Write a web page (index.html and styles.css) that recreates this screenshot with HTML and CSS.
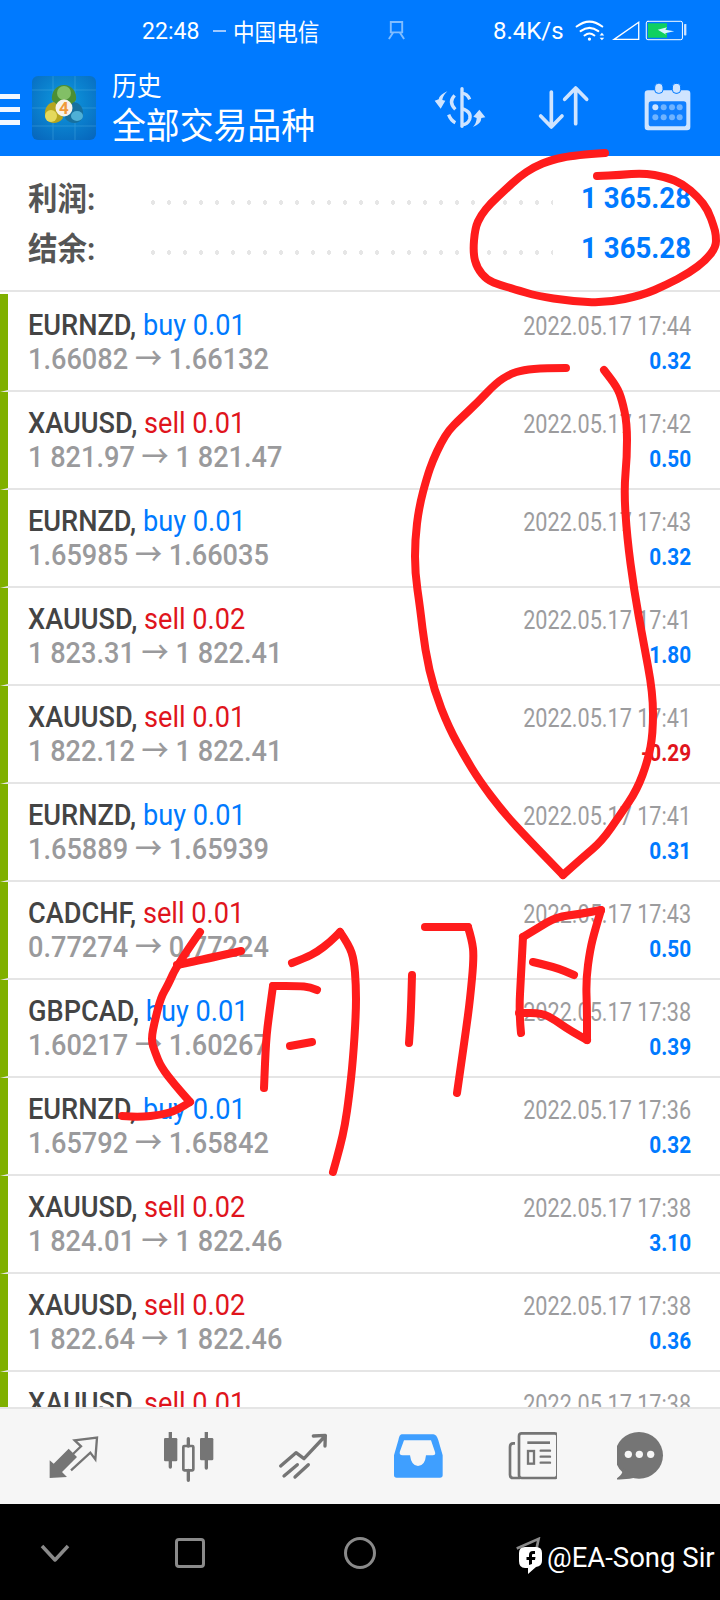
FILE: index.html
```html
<!DOCTYPE html>
<html lang="zh-CN">
<head>
    <meta charset="UTF-8">
    <meta name="viewport" content="width=device-width, initial-scale=1.0">
    <title>历史 - 全部交易品种</title>
    <link rel="stylesheet" href="styles.css">
</head>
<body>
    <div class="phone">
        <div class="status">
            <span class="st st-time">22:48</span>
            <span class="st-dash"></span>
            <span class="st st-carrier">中国电信</span>
            <svg class="st-nfc" viewBox="0 0 20 20"><path d="M4 1h12v11H4zM6.500 12 2 19M13.500 12l4.500 7" fill="none" stroke="#fff" stroke-width="2"/></svg>
            <span class="st st-speed">8.4K/s</span>
            <svg class="st-icons" viewBox="225 25 340 70">
                <g fill="none" stroke="#fff" stroke-linecap="round">
                    <path d="M228 48Q267 18 306 48M240 62Q267 42 294 62M252 75Q267 63 282 75" stroke-width="6"/>
                    <path d="M342 87 417 35V87Z" stroke-width="4" stroke-linejoin="miter"/>
                    <rect x="440" y="32" width="110" height="56" rx="5" stroke-width="3"/>
                </g>
                <circle cx="267" cy="86" r="5" fill="#fff"/>
                <path d="M298 75h14l-7-8zM298 82h14l-7 8z" fill="#fff"/>
                <rect x="445" y="38" width="58" height="44" fill="#10d060"/>
                <path d="M475 58 503 50 498 58 525 62 497 68 502 74Z" fill="#d8f4ff"/>
                <rect x="555" y="40" width="7" height="35" rx="2" fill="#cfe4ff"/>
            </svg>
        </div>

        <div class="appbar">
            <div class="menu"><i></i><i></i><i></i></div>
            <svg class="logo" viewBox="0 0 64 64">
                <defs>
                    <radialGradient id="tile" cx=".5" cy=".4" r=".75">
                        <stop offset="0" stop-color="#0e9be0"/>
                        <stop offset="1" stop-color="#0766bc"/>
                    </radialGradient>
                </defs>
                <rect width="64" height="64" rx="6" fill="url(#tile)"/>
                <path d="M21 0v64M43 0v64M0 14h64M0 32h64M0 50h64" stroke="#6cc4ee" stroke-width="1" opacity=".3"/>
                <path d="M32 9C24 9 19 16 20 24L26 31H38L44 24C45 16 40 9 32 9Z" fill="#4c8f34"/>
                <ellipse cx="32" cy="17" rx="7" ry="7" fill="#82bf66"/>
                <path d="M22 26C14 27 11 36 14 43C18 49 27 48 31 42L27 30Z" fill="#b5a51f"/>
                <ellipse cx="19" cy="40" rx="6" ry="6" fill="#e4d95c"/>
                <path d="M42 26C50 27 53 36 50 43C46 49 37 48 33 42L37 30Z" fill="#17709f"/>
                <ellipse cx="45" cy="40" rx="6" ry="5" fill="#4eb0d6"/>
                <circle cx="32" cy="32" r="8.500" fill="#f6f2ea"/>
                <text class="logo-four" x="32" y="38" text-anchor="middle">4</text>
            </svg>
            <div class="titles">
                <div class="title-small">历史</div>
                <div class="title-big">全部交易品种</div>
            </div>
            <div class="actions">
                <svg viewBox="25 20 162 150">
                    <g fill="none" stroke="#cfe4ff" stroke-width="10">
                        <path d="M112 40V153" stroke-linecap="round"/>
                        <path d="M135 72Q128 54 112 54M112 100Q142 110 135 132Q128 148 112 148M90 60Q70 80 92 102M72 118Q78 135 92 142"/>
                    </g>
                    <path d="M68 48Q42 60 42 72L30 76 48 100 62 76 53 74Q54 62 68 48ZM145 155Q170 145 170 128L182 126 164 103 146 124 156 128Q156 142 145 155Z" fill="#cfe4ff"/>
                </svg>
                <svg viewBox="340 20 162 150">
                    <path d="M380 50V155M348 122 380 155 412 122M453 145V38M420 72 453 38 486 72" fill="none" stroke="#cfe4ff" stroke-width="11" stroke-linecap="round" stroke-linejoin="round"/>
                </svg>
                <svg viewBox="655 20 162 150">
                    <rect x="660" y="45" width="137" height="120" rx="10" fill="#cfe4ff"/>
                    <rect x="672" y="78" width="113" height="75" rx="8" fill="#107fff"/>
                    <rect x="690" y="24" width="25" height="30" rx="11" fill="#cfe4ff" stroke="#007aff" stroke-width="3"/>
                    <rect x="743" y="24" width="25" height="30" rx="11" fill="#cfe4ff" stroke="#007aff" stroke-width="3"/>
                    <g fill="#6fb3ff">
                        <circle cx="692" cy="96" r="9" fill="#cfe4ff"/><circle cx="717" cy="96" r="9"/><circle cx="742" cy="96" r="9"/><circle cx="765" cy="96" r="9"/>
                        <circle cx="692" cy="126" r="9"/><circle cx="717" cy="126" r="9"/><circle cx="742" cy="126" r="9"/><circle cx="765" cy="126" r="9"/>
                    </g>
                </svg>
            </div>
        </div>

        <div class="summary">
            <div class="sum-row">
                <span class="sum-label">利润:</span>
                <span class="sum-dots"></span>
                <span class="sum-value">1 365.28</span>
            </div>
            <div class="sum-row">
                <span class="sum-label">结余:</span>
                <span class="sum-dots"></span>
                <span class="sum-value">1 365.28</span>
            </div>
        </div>

        <div class="list">
            <div class="row">
                <div class="row-left">
                    <div class="line1"><b>EURNZD,</b> <span class="buy">buy 0.01</span></div>
                    <div class="line2">1.66082 → 1.66132</div>
                </div>
                <div class="row-right">
                    <div class="date">2022.05.17 17:44</div>
                    <div class="profit">0.32</div>
                </div>
            </div>
            <div class="row">
                <div class="row-left">
                    <div class="line1"><b>XAUUSD,</b> <span class="sell">sell 0.01</span></div>
                    <div class="line2">1 821.97 → 1 821.47</div>
                </div>
                <div class="row-right">
                    <div class="date">2022.05.17 17:42</div>
                    <div class="profit">0.50</div>
                </div>
            </div>
            <div class="row">
                <div class="row-left">
                    <div class="line1"><b>EURNZD,</b> <span class="buy">buy 0.01</span></div>
                    <div class="line2">1.65985 → 1.66035</div>
                </div>
                <div class="row-right">
                    <div class="date">2022.05.17 17:43</div>
                    <div class="profit">0.32</div>
                </div>
            </div>
            <div class="row">
                <div class="row-left">
                    <div class="line1"><b>XAUUSD,</b> <span class="sell">sell 0.02</span></div>
                    <div class="line2">1 823.31 → 1 822.41</div>
                </div>
                <div class="row-right">
                    <div class="date">2022.05.17 17:41</div>
                    <div class="profit">1.80</div>
                </div>
            </div>
            <div class="row">
                <div class="row-left">
                    <div class="line1"><b>XAUUSD,</b> <span class="sell">sell 0.01</span></div>
                    <div class="line2">1 822.12 → 1 822.41</div>
                </div>
                <div class="row-right">
                    <div class="date">2022.05.17 17:41</div>
                    <div class="profit loss">-0.29</div>
                </div>
            </div>
            <div class="row">
                <div class="row-left">
                    <div class="line1"><b>EURNZD,</b> <span class="buy">buy 0.01</span></div>
                    <div class="line2">1.65889 → 1.65939</div>
                </div>
                <div class="row-right">
                    <div class="date">2022.05.17 17:41</div>
                    <div class="profit">0.31</div>
                </div>
            </div>
            <div class="row">
                <div class="row-left">
                    <div class="line1"><b>CADCHF,</b> <span class="sell">sell 0.01</span></div>
                    <div class="line2">0.77274 → 0.77224</div>
                </div>
                <div class="row-right">
                    <div class="date">2022.05.17 17:43</div>
                    <div class="profit">0.50</div>
                </div>
            </div>
            <div class="row">
                <div class="row-left">
                    <div class="line1"><b>GBPCAD,</b> <span class="buy">buy 0.01</span></div>
                    <div class="line2">1.60217 → 1.60267</div>
                </div>
                <div class="row-right">
                    <div class="date">2022.05.17 17:38</div>
                    <div class="profit">0.39</div>
                </div>
            </div>
            <div class="row">
                <div class="row-left">
                    <div class="line1"><b>EURNZD,</b> <span class="buy">buy 0.01</span></div>
                    <div class="line2">1.65792 → 1.65842</div>
                </div>
                <div class="row-right">
                    <div class="date">2022.05.17 17:36</div>
                    <div class="profit">0.32</div>
                </div>
            </div>
            <div class="row">
                <div class="row-left">
                    <div class="line1"><b>XAUUSD,</b> <span class="sell">sell 0.02</span></div>
                    <div class="line2">1 824.01 → 1 822.46</div>
                </div>
                <div class="row-right">
                    <div class="date">2022.05.17 17:38</div>
                    <div class="profit">3.10</div>
                </div>
            </div>
            <div class="row">
                <div class="row-left">
                    <div class="line1"><b>XAUUSD,</b> <span class="sell">sell 0.02</span></div>
                    <div class="line2">1 822.64 → 1 822.46</div>
                </div>
                <div class="row-right">
                    <div class="date">2022.05.17 17:38</div>
                    <div class="profit">0.36</div>
                </div>
            </div>
            <div class="row">
                <div class="row-left">
                    <div class="line1"><b>XAUUSD,</b> <span class="sell">sell 0.01</span></div>
                </div>
                <div class="row-right">
                    <div class="date">2022.05.17 17:38</div>
                </div>
            </div>
        </div>

        <div class="tabs">
            <svg viewBox="50 30 162 150">
                <path d="M58 115 70 125 115 80 140 105 95 150 110 165 58 168Z" fill="#757575"/>
                <path d="M122 145 180 92 195 112 200 47 133 55 152 73 128 96" fill="none" stroke="#757575" stroke-width="7"/>
            </svg>
            <svg viewBox="393 30 162 150">
                <path d="M421 30V135M529 30V138" stroke="#757575" stroke-width="10" stroke-linecap="round"/>
                <rect x="402" y="48" width="40" height="70" rx="4" fill="#757575"/>
                <rect x="510" y="48" width="40" height="67" rx="4" fill="#757575"/>
                <path d="M475 50V72M475 145V175" stroke="#757575" stroke-width="10" stroke-linecap="round"/>
                <rect x="460" y="72" width="30" height="73" rx="3" fill="none" stroke="#757575" stroke-width="8"/>
            </svg>
            <svg viewBox="735 30 162 150">
                <path d="M752 132 798 92 822 110 880 48M850 42 886 40 885 72M762 162 802 128M795 165 835 128" fill="none" stroke="#757575" stroke-width="10" stroke-linecap="round" stroke-linejoin="round"/>
            </svg>
            <svg viewBox="27 30 162 150">
                <path d="M65 37H160Q170 37 175 55L188 100V160Q188 167 180 167H50Q42 167 42 160V100L55 55Q58 37 65 37Z" fill="#3f9fff"/>
                <path d="M72 55H153L165 90Q168 100 158 100H138Q135 132 114 132Q94 132 90 100H68Q56 100 60 88Z" fill="#f6f6f6"/>
            </svg>
            <svg viewBox="369 30 162 150">
                <g fill="none" stroke="#757575">
                    <rect x="417" y="34" width="115" height="134" rx="8" stroke-width="8"/>
                    <path d="M405 64H400Q390 64 390 75V158Q390 168 400 168H420" stroke-width="8"/>
                    <path d="M442 62H510" stroke-width="8"/>
                    <rect x="444" y="87" width="18" height="38" stroke-width="7"/>
                    <path d="M482 86H510M482 104H510M482 122H510" stroke-width="7" stroke-linecap="round"/>
                </g>
            </svg>
            <svg viewBox="711 30 162 150">
                <ellipse cx="777" cy="100" rx="72" ry="70" fill="#757575"/>
                <path d="M730 140Q728 160 705 172Q745 174 775 165Z" fill="#757575"/>
                <circle cx="745" cy="97" r="11" fill="#f6f6f6"/><circle cx="778" cy="97" r="11" fill="#f6f6f6"/><circle cx="812" cy="97" r="11" fill="#f6f6f6"/>
            </svg>
        </div>

        <div class="navbar">
            <svg class="nav-back" viewBox="0 0 32 20"><path d="M3 3 16 17 29 3" fill="none" stroke="#8a8a8a" stroke-width="3.500" stroke-linejoin="round"/></svg>
            <span class="nav-square"></span>
            <span class="nav-circle"></span>
        </div>

        <!-- red marker scribbled over the screenshot, smoothed by scribble.js -->
        <svg class="scribble" viewBox="0 0 720 1600">
            <polyline points="605,153 575,155 551,160 534,167 519,177 505,190 491,203 481,215 475,228 473,253 477,268 487,280 500,285 514,289 537,296 570,301 606,303 643,295 666,285 689,273 706,260 716,247 716,235 714,227 708,210 698,197 683,184 666,177 643,173 620,175 597,176"/>
            <polyline points="566,368 545,368 523,370 510,374 496,383 478,402 459,420 449,430 441,443 433,460 427,477 419,507 415,540 415,573 420,607 425,650 434,690 449,728 465,757 479,780 503,812 530,841 563,875"/>
            <polyline points="563,875 582,858 602,841 620,815 637,790 648,760 653,734 653,693 643,640 634,590 627,537 624,490 627,457 627,423 622,400 617,387 604,370"/>
            <polyline points="241,951 210,958 177,965"/>
            <polyline points="200,932 177,965 168,985 161,997 155,1020 151,1040 155,1052 161,1067 175,1085 190,1102"/>
            <polyline points="190,1102 178,1110 161,1115 140,1117 122,1116"/>
            <polyline points="292,963 305,958 317,952 330,942 340,932"/>
            <polyline points="340,932 349,945 354,960 356,985 356,1013 353,1060 349,1097 345,1125 340,1147 333,1172"/>
            <polyline points="317,990 310,987 298,986 273,986"/>
            <polyline points="273,986 269,1015 266,1040 264,1088"/>
            <polyline points="290,1046 312,1042"/>
            <polyline points="412,975 411,1013 409,1043"/>
            <polyline points="425,927 450,927 468,927"/>
            <polyline points="468,927 472,940 474,957 470,1000 466,1030 461,1065 457,1093"/>
            <polyline points="521,1033 519,1013 521,975 523,937"/>
            <polyline points="523,937 538,928 556,917 580,914 601,910"/>
            <polyline points="601,910 595,930 590,950 586,980 587,1010 587,1040"/>
            <polyline points="587,1040 569,1030 555,1020 542,1013 519,1013"/>
            <polyline points="533,962 555,967 574,975"/>
        </svg>

        <!-- watermark -->
        <div class="mark">
            <svg class="mark-back" viewBox="0 0 32 18"><path d="M2 13 27 2 24 16" fill="none" stroke="#8a8a8a" stroke-width="3"/></svg>
            <svg class="mark-fb" viewBox="0 0 25 28">
                <path d="M7 1H18Q24 1 24 7V15Q24 20 18 21L10 28 10 22H7Q1 22 1 15V7Q1 1 7 1Z" fill="#fff"/>
                <path d="M17 5H15Q11 5 11 9V11H8.500V14H11V19L14 18V14H17L17.500 11H14V9Q14 8 15 8H17Z" fill="#000"/>
            </svg>
            <span class="mark-text">@EA-Song Sir</span>
        </div>
    </div>
    <script src="scribble.js"></script>
</body>
</html>
```

FILE: styles.css
```css
* {
    box-sizing: border-box;
}
html, body {
    margin: 0;
    padding: 0;
    background: black;
}
body {
    font-family: Roboto, "Noto Sans CJK SC", sans-serif;
}
.phone {
    position: relative;
    width: 720px;
    height: 1600px;
    overflow: hidden;
    display: flex;
    flex-direction: column;
    background: white;
}

/* status bar */
.status {
    height: 60px;
    flex: none;
    background: #007aff;
    color: white;
    display: flex;
    align-items: center;
    padding-left: 142px;
    padding-top: 1px;
}
.st {
    display: block;
    font-size: 24px;
    white-space: nowrap;
    transform: scaleX(.93);
    transform-origin: left center;
}
.st-time {
    width: 71px;
    transform: scaleX(.96);
}
.st-dash {
    width: 13px;
    height: 2px;
    background: #9ec9ff;
    margin-right: 7px;
}
.st-carrier {
    width: 154px;
    transform: scaleX(.9);
}
.st-nfc {
    width: 19px;
    height: 19px;
    opacity: .5;
    margin-right: 87px;
}
.st-speed {
    width: 82px;
    transform: scaleX(1);
}
.st-icons {
    width: 113px;
    height: 23px;
}

/* app bar */
.appbar {
    height: 96px;
    flex: none;
    background: #007aff;
    display: flex;
    align-items: center;
}
.menu {
    width: 20px;
    display: flex;
    flex-direction: column;
    gap: 8px;
    margin-right: 12px;
    margin-top: 2px;
}
.menu i {
    display: block;
    height: 5px;
    background: #f2f7ff;
}
.logo {
    width: 64px;
    height: 64px;
    margin-right: 16px;
}
.logo-four {
    font-size: 17px;
    font-weight: 700;
    fill: #f0993a;
}
.titles {
    color: white;
    flex: 1;
    margin-top: 2px;
}
.title-small {
    font-size: 27px;
    line-height: 36px;
    transform: scaleX(.92);
    transform-origin: left;
}
.title-big {
    font-size: 36px;
    line-height: 44px;
    white-space: nowrap;
    transform: scaleX(.94);
    transform-origin: left;
}
.actions {
    display: flex;
    gap: 51px;
    padding-right: 23px;
    margin-top: -2px;
}
.actions svg {
    width: 54px;
    height: 50px;
}

/* profit and balance */
.summary {
    height: 136px;
    flex: none;
    border-bottom: 2px solid #e5e5e5;
    padding: 16px 29px 0 28px;
}
.sum-row {
    height: 50px;
    display: flex;
    align-items: center;
}
.sum-label {
    width: 117px;
    font-size: 32px;
    line-height: 44px;
    font-weight: 700;
    color: #555;
    white-space: nowrap;
    transform: scaleX(.92) translateY(2px);
    transform-origin: left;
}
.sum-dots {
    width: 408px;
    height: 5px;
    margin-top: 10px;
    background: radial-gradient(circle 2.500px, #e6e6e6 100%, transparent 100%) 0 0 / 16px 5px repeat-x;
}
.sum-value {
    flex: 1;
    text-align: right;
    font-size: 30px;
    font-weight: 700;
    color: #007aff;
    white-space: nowrap;
    transform: scaleX(.92);
    transform-origin: right;
}

/* orders */
.list {
    flex: 1;
    overflow: hidden;
    padding-top: 2px;
}
.row {
    height: 98px;
    display: flex;
    justify-content: space-between;
    border-bottom: 2px solid #e5e5e5;
    border-left: 8px solid #7fb000;
    padding: 14px 29px 0 20px;
}
.row-left,
.row-right {
    white-space: nowrap;
}
.row-left {
    transform: scaleX(.905);
    transform-origin: left top;
}
.row-right {
    text-align: right;
    padding-top: 2px;
    transform: scaleX(.865);
    transform-origin: right top;
}
.line1 {
    font-size: 30px;
    line-height: 33px;
}
.line1 b {
    font-weight: 500;
    color: #444;
}
.buy {
    color: #007aff;
}
.sell {
    color: #e0141c;
}
.line2 {
    font-size: 30px;
    line-height: 35px;
    font-weight: 500;
    color: #9a9a9c;
}
.date {
    font-size: 25px;
    line-height: 34px;
    color: #9c9c9e;
}
.profit {
    font-size: 24px;
    line-height: 35px;
    font-weight: 700;
    color: #007aff;
}
.loss {
    color: #e0141c;
}

/* bottom tabs */
.tabs {
    height: 97px;
    flex: none;
    background: #f6f6f6;
    border-top: 2px solid #e5e5e5;
    display: flex;
    align-items: center;
    gap: 60px;
    padding-left: 47px;
    position: relative;
}
.tabs svg {
    width: 54px;
    height: 50px;
    flex: none;
}

/* android nav */
.navbar {
    height: 96px;
    flex: none;
    background: black;
    display: flex;
    align-items: center;
    padding-left: 39px;
    padding-top: 2px;
}
.nav-back {
    width: 32px;
    height: 20px;
    margin-right: 104px;
}
.nav-square {
    width: 30px;
    height: 30px;
    border: 3px solid #8a8a8a;
    border-radius: 4px;
    margin-right: 139px;
}
.nav-circle {
    width: 32px;
    height: 32px;
    border: 3px solid #8a8a8a;
    border-radius: 50%;
}

.scribble {
    position: absolute;
    left: 0;
    top: 0;
    width: 720px;
    height: 1600px;
    pointer-events: none;
}
.scribble polyline,
.scribble path {
    fill: none;
    stroke: #ff1c1c;
    stroke-width: 8;
    stroke-linecap: round;
    stroke-linejoin: round;
}

.mark {
    position: absolute;
    left: 518px;
    top: 1537px;
    height: 40px;
    display: flex;
    align-items: center;
    color: white;
}
.mark-back {
    position: absolute;
    left: -3px;
    top: 0;
    width: 28px;
    height: 16px;
}
.mark-fb {
    position: relative;
    width: 25px;
    height: 28px;
    margin-right: 4px;
    margin-top: 6px;
}
.mark-text {
    font-size: 27.500px;
    white-space: nowrap;
}
```

FILE: scribble.js
```js
// turn each marker polyline into a smooth path through the midpoints
const svgNs = 'http://www.w3.org/2000/svg';

document.querySelectorAll('.scribble polyline').forEach(function (line) {
    const pts = line.getAttribute('points').trim().split(/\s+/).map(function (p) {
        return p.split(',').map(Number);
    });
    let d = `M${pts[0][0]} ${pts[0][1]}`;
    for (let i = 1; i < pts.length - 1; i++) {
        const mx = (pts[i][0] + pts[i + 1][0]) / 2;
        const my = (pts[i][1] + pts[i + 1][1]) / 2;
        d += `Q${pts[i][0]} ${pts[i][1]} ${mx} ${my}`;
    }
    const last = pts[pts.length - 1];
    d += `L${last[0]} ${last[1]}`;
    const path = document.createElementNS(svgNs, 'path');
    path.setAttribute('d', d);
    line.replaceWith(path);
});
```
